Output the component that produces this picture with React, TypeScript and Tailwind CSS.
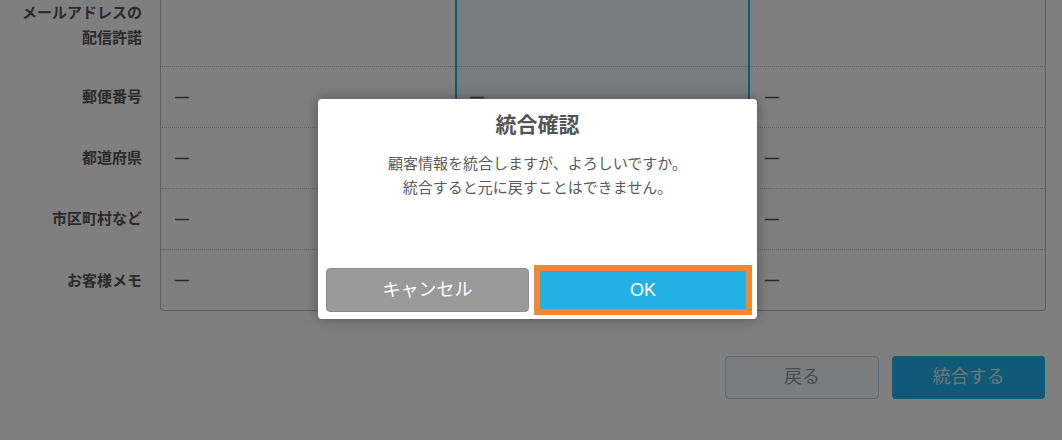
import React from 'react';

const font = { fontFamily: '"Liberation Sans", "Noto Sans CJK JP", sans-serif' };

interface Row {
  label: string[];
  values: string[];
}

const rows: Row[] = [
  { label: ['メールアドレスの', '配信許諾'], values: ['', '', ''] },
  { label: ['郵便番号'], values: ['—', '—', '—'] },
  { label: ['都道府県'], values: ['—', '—', '—'] },
  { label: ['市区町村など'], values: ['—', '—', '—'] },
  { label: ['お客様メモ'], values: ['—', '—', '—'] },
];

// one value cell: dotted divider on top (except first row), then the value
const Cell: React.FC<{ value: string; divider: boolean; className?: string; pad: string }> = ({
  value,
  divider,
  className,
  pad,
}) => (
  <div className={`flex flex-col ${className ?? ''}`}>
    {divider && <div className="border-t border-dotted border-[#c4c4c4]" />}
    <div className={`flex-1 flex items-center ${pad} text-[14px] font-bold text-[#555]`}>{value}</div>
  </div>
);

const ConfirmDialog: React.FC = () => (
  <div className="absolute inset-0 bg-black/50">
    <div className="absolute left-[318px] top-[99px] w-[439px] h-[220px] bg-white rounded-[4px] shadow-[0_0_14px_rgba(0,0,0,0.35)] flex flex-col">
      <h2 className="pt-[11px] text-center text-[21px] leading-[30px] font-bold text-[#555]">統合確認</h2>
      <div className="mt-[12px] text-center text-[15px] leading-[24px] text-[#5a5a5a]">
        <p>顧客情報を統合しますが、よろしいですか。</p>
        <p>統合すると元に戻すことはできません。</p>
      </div>
      <div className="mt-auto flex items-center gap-[5px] pl-[8px] pr-[5px] pb-[4px] h-[54px]">
        <button className="w-[203px] h-[44px] rounded-[4px] border border-[#8c8c8c] bg-[#9a9a9a] text-white text-[18px]">
          キャンセル
        </button>
        <button className="w-[218px] h-[50px] border-[6px] border-[#f0883a] bg-[#22b0e6] text-white text-[18px]">
          OK
        </button>
      </div>
    </div>
  </div>
);

const App: React.FC = () => {
  return (
    <div className="relative w-[1062px] h-[440px] overflow-hidden bg-white" style={font}>
      <div className="-mt-[17px]">
        {rows.map((row, i) => {
          const first = i === 0;
          const last = i === rows.length - 1;
          return (
            <div key={i} className={`flex ${first ? 'h-[83px]' : last ? 'h-[62px]' : 'h-[61px]'}`}>
              <div className="w-[160px] pr-[18px] flex flex-col justify-center items-end text-[15px] leading-[25px] font-bold text-[#555]">
                {row.label.map((l) => (
                  <span key={l}>{l}</span>
                ))}
              </div>
              <Cell
                value={row.values[0]}
                divider={!first}
                pad="pl-[14px]"
                className={`w-[295px] border-l border-[#bbbbbb] ${last ? 'border-b rounded-bl-[4px]' : ''}`}
              />
              <div className="w-[295px] flex flex-col bg-[#eef8fe] border-x-2 border-[#22b0e6]">
                <Cell
                  value={row.values[1]}
                  divider={!first}
                  pad="pl-[13px]"
                  className={`flex-1 ${last ? 'border-b border-[#bbbbbb]' : ''}`}
                />
              </div>
              <Cell
                value={row.values[2]}
                divider={!first}
                pad="pl-[15px]"
                className={`w-[296px] border-r border-[#bbbbbb] ${last ? 'border-b rounded-br-[4px]' : ''}`}
              />
            </div>
          );
        })}
      </div>

      <div className="mt-[45px] flex justify-end gap-[13px] pr-[17px]">
        <button className="w-[154px] h-[43px] rounded-[4px] border border-[#bcd4e8] bg-[#f4f9fd] text-[18px] text-[#8a96a2]">
          戻る
        </button>
        <button className="w-[153px] h-[43px] rounded-[4px] bg-[#20b2ee] text-[18px] text-[#dcedf5]">
          統合する
        </button>
      </div>

      <ConfirmDialog />
    </div>
  );
};

export default App;
